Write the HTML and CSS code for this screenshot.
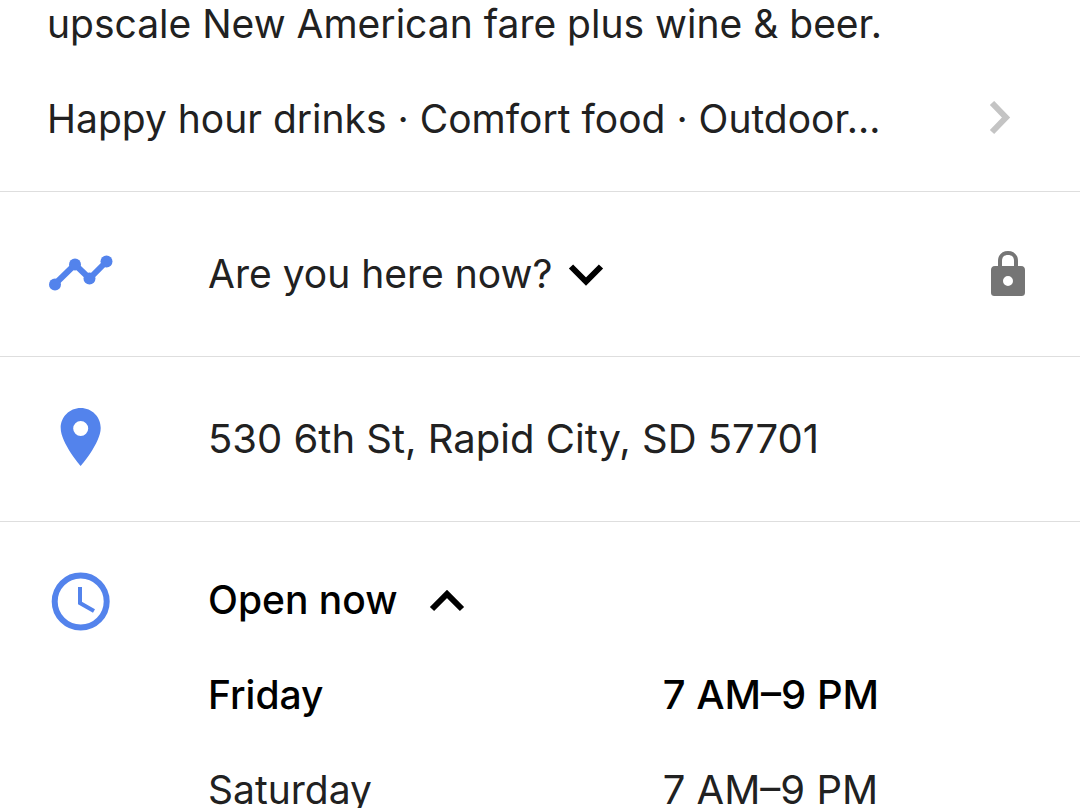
FILE: index.html
```html
<!DOCTYPE html>
<html lang="en">
<head>
    <meta charset="UTF-8">
    <meta name="viewport" content="width=device-width, initial-scale=1.0">
    <title>Place details</title>
    <link rel="stylesheet" href="styles.css">
</head>
<body>
    <main>
        <section class="about" id="about">
            <p class="summary">upscale New American fare plus wine &amp; beer.</p>
            <a class="highlights" href="#about">
                <span>Happy hour drinks · Comfort food · Outdoor…</span>
                <svg class="next" viewBox="0 0 24 36" aria-hidden="true"><path d="M4 2L18 16.500L4 31"/></svg>
            </a>
        </section>

        <section class="row">
            <svg class="icon" viewBox="0 0 64 64" aria-hidden="true">
                <path class="line" d="M7 42L27 22.500L41.500 36.500L58.500 19.500"/>
                <circle cx="7" cy="42.500" r="6"/>
                <circle cx="27" cy="22.500" r="6"/>
                <circle cx="41.500" cy="36.500" r="6"/>
                <circle cx="58.500" cy="19.500" r="6"/>
            </svg>
            <button class="toggle" type="button">
                Are you here now?
                <svg class="chevron" viewBox="0 0 36 24" aria-hidden="true"><path d="M3 4.500L18 19.500L33 4.500"/></svg>
            </button>
            <svg class="lock" viewBox="0 0 36 46" role="img" aria-label="Private">
                <path d="M31 15H28V10C28 4 24 0 18 0S8 4 8 10V15H5C2 15 1 17 1 19V41C1 44 2 45 5 45H31C34 45 35 44 35 41V19C35 17 34 15 31 15ZM12 15V10C12 6 14 4 18 4S24 6 24 10V15ZM18 35A5 5 0 1 1 18 25A5 5 0 0 1 18 35Z"/>
            </svg>
        </section>

        <section class="row">
            <svg class="icon" viewBox="0 0 64 64" aria-hidden="true">
                <path fill-rule="evenodd" d="M32.700 1C21.500 1 12.700 10 12.700 21C12.700 36 32.700 59 32.700 59S52.700 36 52.700 21C52.700 10 44 1 32.700 1ZM32.700 29A7.500 7.500 0 1 1 32.700 14A7.500 7.500 0 0 1 32.700 29Z"/>
            </svg>
            <p class="address">530 6th St, Rapid City, SD 57701</p>
        </section>

        <section class="row hours-row">
            <svg class="icon" viewBox="0 0 64 64" aria-hidden="true">
                <circle class="ring" cx="32.700" cy="32.400" r="26"/>
                <path class="hands" d="M32 18V34L46 42"/>
            </svg>
            <div class="hours">
                <button class="toggle open" type="button">
                    Open now
                    <svg class="chevron" viewBox="0 0 36 24" aria-hidden="true"><path d="M3 21L18 6L33 21"/></svg>
                </button>
                <table>
                    <tr class="today"><th scope="row">Friday</th><td>7 AM–9 PM</td></tr>
                    <tr><th scope="row">Saturday</th><td>7 AM–9 PM</td></tr>
                </table>
            </div>
        </section>
    </main>
</body>
</html>
```

FILE: styles.css
```css
* {
    box-sizing: border-box;
}

body {
    margin: 0;
    overflow: hidden;
    background: #fff;
    color: #212121;
    font-family: Inter, Arial, sans-serif;
    font-size: 40px;
    line-height: 48px;
}

p {
    margin: 0;
}

.about {
    padding: 0 48px 48px 47px;
    font-size: 39px;
}

.highlights {
    display: flex;
    align-items: center;
    justify-content: space-between;
    margin-top: 47px;
    padding-right: 20px;
    color: inherit;
    text-decoration: none;
}

.next {
    width: 24px;
    height: 36px;
    fill: none;
    stroke: #c4c4c4;
    stroke-width: 6;
}

.row {
    display: flex;
    align-items: center;
    min-height: 165px;
    padding: 0 54px 0 48px;
    border-top: 1px solid #dedede;
}

.icon {
    flex: none;
    width: 64px;
    height: 64px;
    margin-right: 96px;
    overflow: visible;
    fill: #5383ec;
}

.line,
.ring,
.hands {
    fill: none;
    stroke: #5383ec;
    stroke-width: 6;
}

.hands {
    stroke-width: 4;
}

.toggle {
    display: flex;
    align-items: center;
    gap: 16px;
    padding: 0;
    border: 0;
    background: none;
    color: inherit;
    font: inherit;
    font-size: 39px;
}

.chevron {
    width: 36px;
    height: 24px;
    fill: none;
    stroke: #000;
    stroke-width: 6;
}

.lock {
    width: 36px;
    height: 46px;
    margin-left: auto;
    fill: #757575;
}

.hours-row {
    align-items: flex-start;
    padding-top: 47px;
    padding-right: 60px;
}

.hours {
    flex: 1;
    padding-top: 7px;
}

.open {
    gap: 32px;
    color: #000;
    font-weight: 500;
}

table {
    width: 100%;
    margin-top: 23px;
    border-collapse: collapse;
}

th,
td {
    height: 95px;
    padding: 0;
    text-align: left;
    font-weight: inherit;
}

th {
    width: 56%;
    font-size: 39px;
}

.today {
    color: #000;
    font-weight: 500;
}
```
